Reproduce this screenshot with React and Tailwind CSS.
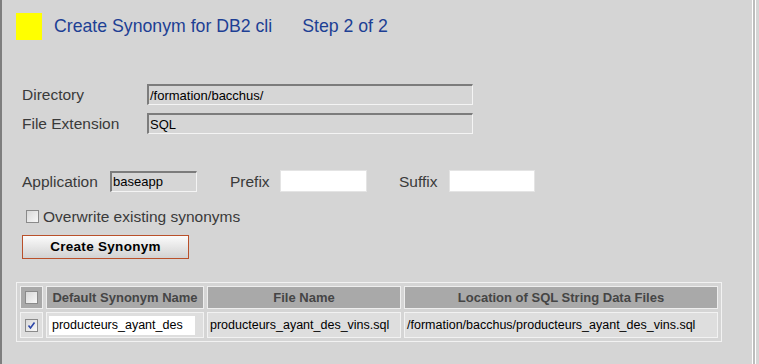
import React from "react";

const font = { fontFamily: '"Liberation Sans", Arial, sans-serif' };

function Box({ checked }) {
  return (
    <span className="inline-flex w-[13px] h-[13px] border border-[#8a8a8a] bg-gradient-to-br from-[#d8d8d8] to-[#f8f8f8] items-center justify-center">
      {checked && (
        <svg width="9" height="9" viewBox="0 0 9 9">
          <path d="M1.5 4.5 L3.5 7 L7.5 1.5" fill="none" stroke="#2b45a8" strokeWidth="1.6" />
        </svg>
      )}
    </span>
  );
}

function Inset({ className, children }) {
  return (
    <div className={"h-[21px] bg-[#d6d6d6] border-t-2 border-l-2 border-b border-r border-t-[#7c7c7c] border-l-[#7c7c7c] border-b-[#f4f4f4] border-r-[#f4f4f4] flex items-center pl-[1px] text-[13px] text-black leading-none " + className}>
      {children}
    </div>
  );
}

export default function App() {
  return (
    <div className="w-[759px] h-[364px] flex bg-[#d5d5d5] overflow-hidden text-[#3a3a3a]" style={font}>
      <div className="w-[2px] bg-[#7e7e7e]" />
      <div className="flex-1 flex flex-col">
        <div className="flex items-center mt-[13px] ml-[14px] h-[27px]">
          <div className="w-[26px] h-[27px] bg-[#ffff00]" />
          <span className="ml-[12px] text-[17.7px] text-[#1d3f94]">Create Synonym for DB2 cli</span>
          <span className="ml-[30px] text-[17.7px] text-[#1d3f94]">Step 2 of 2</span>
        </div>

        <div className="flex items-center mt-[44px] ml-[20px] h-[21px]">
          <span className="w-[125px] text-[15.5px] leading-[21px]">Directory</span>
          <Inset className="w-[326px]">/formation/bacchus/</Inset>
        </div>
        <div className="flex items-center mt-[8px] ml-[20px] h-[21px]">
          <span className="w-[125px] text-[15.5px] leading-[21px]">File Extension</span>
          <Inset className="w-[326px]">SQL</Inset>
        </div>

        <div className="flex items-center mt-[36px] ml-[20px] h-[22px]">
          <span className="w-[88px] text-[15.5px] leading-[21px]">Application</span>
          <Inset className="w-[87px]">baseapp</Inset>
          <span className="ml-[33px] w-[50px] text-[15.5px] leading-[21px]">Prefix</span>
          <div className="w-[87px] h-[22px] bg-white border border-[#e4e4e4]" />
          <span className="ml-[32px] w-[50px] text-[15.5px] leading-[21px]">Suffix</span>
          <div className="w-[86px] h-[22px] bg-white border border-[#e4e4e4]" />
        </div>

        <div className="flex items-center mt-[18px] ml-[24px] h-[13px]">
          <Box />
          <span className="ml-[4px] text-[15.5px] leading-[13px]">Overwrite existing synonyms</span>
        </div>

        <div className="mt-[12px] ml-[20px]">
          <div className="w-[167px] h-[24px] border border-[#b9502a] bg-gradient-to-b from-[#fbfbfb] to-[#d2d2d2] flex items-center justify-center text-[13.5px] text-black font-bold tracking-[0.3px]">
            Create Synonym
          </div>
        </div>

        <div className="mt-[23px] ml-[14px]">
          <table className="border border-[#f2f2f2] border-separate border-spacing-[3px] text-[12px]">
            <thead>
              <tr className="h-[23px]">
                <th className="w-[23px] p-0 bg-[#a9a9a9] border border-[#eeeeee]">
                  <div className="flex items-center justify-center"><Box /></div>
                </th>
                <th className="w-[158px] p-0 bg-[#a9a9a9] border border-[#eeeeee] font-bold text-[#454545] text-[13px]">Default Synonym Name</th>
                <th className="w-[194px] p-0 bg-[#a9a9a9] border border-[#eeeeee] font-bold text-[#454545] text-[13px]">File Name</th>
                <th className="w-[314px] p-0 bg-[#a9a9a9] border border-[#eeeeee] font-bold text-[#454545] text-[13px]">Location of SQL String Data Files</th>
              </tr>
            </thead>
            <tbody>
              <tr className="h-[26px]">
                <td className="p-0 bg-[#dedede] border border-[#f2f2f2]">
                  <div className="flex items-center justify-center"><Box checked /></div>
                </td>
                <td className="p-0 bg-[#dedede] border border-[#f2f2f2]">
                  <div className="ml-[2px] w-[146px] h-[19px] bg-white overflow-hidden whitespace-nowrap text-[12.5px] text-black leading-[19px] pl-[3px]">producteurs_ayant_des</div>
                </td>
                <td className="p-0 pl-[2px] bg-[#dedede] border border-[#f2f2f2] text-[12.5px] text-black whitespace-nowrap">producteurs_ayant_des_vins.sql</td>
                <td className="p-0 pl-[2px] bg-[#dedede] border border-[#f2f2f2] text-[12.5px] text-black whitespace-nowrap">/formation/bacchus/producteurs_ayant_des_vins.sql</td>
              </tr>
            </tbody>
          </table>
        </div>
      </div>
      <div className="w-[4px] border-l border-r border-white bg-[#bdbdbd]" />
      <div className="w-[3px]" />
    </div>
  );
}
